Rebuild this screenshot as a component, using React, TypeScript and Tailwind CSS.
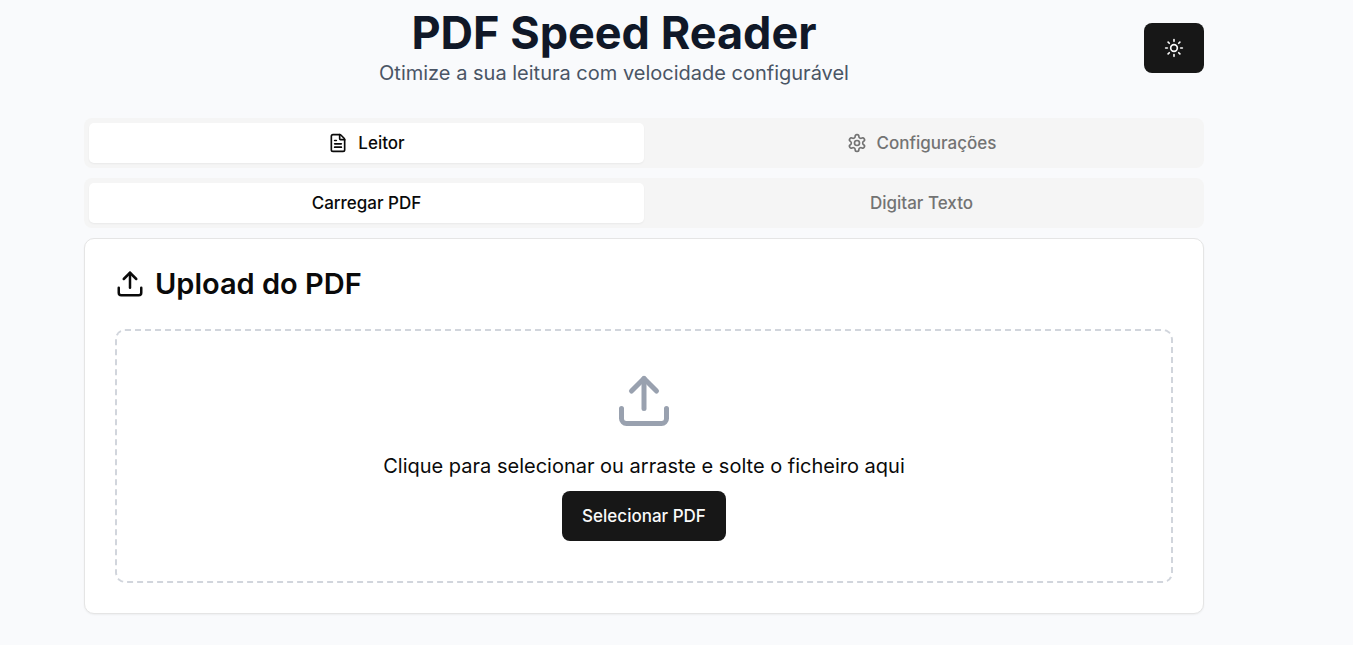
import { useState } from "react";
import type { ReactNode } from "react";
import { FileText, Sun, Upload } from "lucide-react";

function SettingsIcon() {
  return (
    <svg
      className="size-5 shrink-0"
      viewBox="0 0 24 24"
      fill="none"
      stroke="currentColor"
      strokeWidth="2"
      strokeLinecap="round"
      strokeLinejoin="round"
      aria-hidden="true"
    >
      <path d="M12.22 2h-.44a2 2 0 0 0-2 2v.18a2 2 0 0 1-1 1.73l-.43.25a2 2 0 0 1-2 0l-.15-.08a2 2 0 0 0-2.73.73l-.22.38a2 2 0 0 0 .73 2.73l.15.1a2 2 0 0 1 1 1.72v.51a2 2 0 0 1-1 1.74l-.15.09a2 2 0 0 0-.73 2.73l.22.38a2 2 0 0 0 2.73.73l.15-.08a2 2 0 0 1 2 0l.43.25a2 2 0 0 1 1 1.73V20a2 2 0 0 0 2 2h.44a2 2 0 0 0 2-2v-.18a2 2 0 0 1 1-1.73l.43-.25a2 2 0 0 1 2 0l.15.08a2 2 0 0 0 2.73-.73l.22-.39a2 2 0 0 0-.73-2.73l-.15-.08a2 2 0 0 1-1-1.74v-.5a2 2 0 0 1 1-1.74l.15-.09a2 2 0 0 0 .73-2.73l-.22-.38a2 2 0 0 0-2.73-.73l-.15.08a2 2 0 0 1-2 0l-.43-.25a2 2 0 0 1-1-1.73V4a2 2 0 0 0-2-2z" />
      <circle cx="12" cy="12" r="3" />
    </svg>
  );
}

type Tab = { label: string; icon?: ReactNode };

function TabBar({ label, tabs }: { label: string; tabs: Tab[] }) {
  const [active, setActive] = useState(0);
  return (
    <div
      role="tablist"
      aria-label={label}
      className="grid grid-cols-2 rounded-lg bg-[#f5f5f5] p-[5px] text-[#737373]"
    >
      {tabs.map((tab, i) => (
        <button
          key={tab.label}
          type="button"
          role="tab"
          aria-selected={i === active}
          onClick={() => setActive(i)}
          className={
            i === active
              ? "flex h-10 items-center justify-center gap-2.5 rounded-[5px] bg-white text-[17px] leading-[26px] font-medium text-[#0a0a0a] shadow-xs"
              : "flex h-10 items-center justify-center gap-2.5 rounded-[5px] text-[17px] leading-[26px] font-medium"
          }
        >
          {tab.icon}
          {tab.label}
        </button>
      ))}
    </div>
  );
}

export default function App() {
  return (
    <div className="min-h-screen bg-[#f9fafc] pt-2 pr-[65px] pb-8 font-['Inter',sans-serif] text-[#0a0a0a]">
      <main className="mx-auto flex max-w-[1120px] flex-col gap-2.5">
        <header className="mb-5 flex items-center justify-between">
          <div className="flex-1 text-center">
            <h1 className="text-[45px] leading-[50px] font-bold text-[#101828]">PDF Speed Reader</h1>
            <p className="text-xl leading-[30px] text-[#4a5565]">
              Otimize a sua leitura com velocidade configurável
            </p>
          </div>
          <button
            type="button"
            aria-label="Alternar tema"
            className="flex h-[50px] w-[60px] items-center justify-center rounded-lg bg-[#171717] text-[#fafafa]"
          >
            <Sun className="size-5" />
          </button>
        </header>

        <TabBar
          label="Secções"
          tabs={[
            { label: "Leitor", icon: <FileText className="size-5 shrink-0" /> },
            { label: "Configurações", icon: <SettingsIcon /> },
          ]}
        />
        <TabBar label="Origem do texto" tabs={[{ label: "Carregar PDF" }, { label: "Digitar Texto" }]} />

        <section className="rounded-[10px] border border-[#e5e5e5] bg-white p-[30px] shadow-xs">
          <h2 className="flex items-center gap-2.5 text-[29px] leading-[30px] font-semibold">
            <Upload className="size-[30px]" />
            Upload do PDF
          </h2>
          <div className="mt-[30px] flex flex-col items-center rounded-[10px] border-2 border-dashed border-[#d1d5dc] p-10 text-center">
            <Upload className="size-[60px] text-[#99a1af]" />
            <p className="mt-5 text-xl leading-[30px]">
              Clique para selecionar ou arraste e solte o ficheiro aqui
            </p>
            <button
              type="button"
              className="mt-2.5 h-[50px] rounded-lg bg-[#171717] px-5 text-[17px] leading-[26px] font-medium text-[#fafafa]"
            >
              Selecionar PDF
            </button>
          </div>
        </section>
      </main>
    </div>
  );
}
